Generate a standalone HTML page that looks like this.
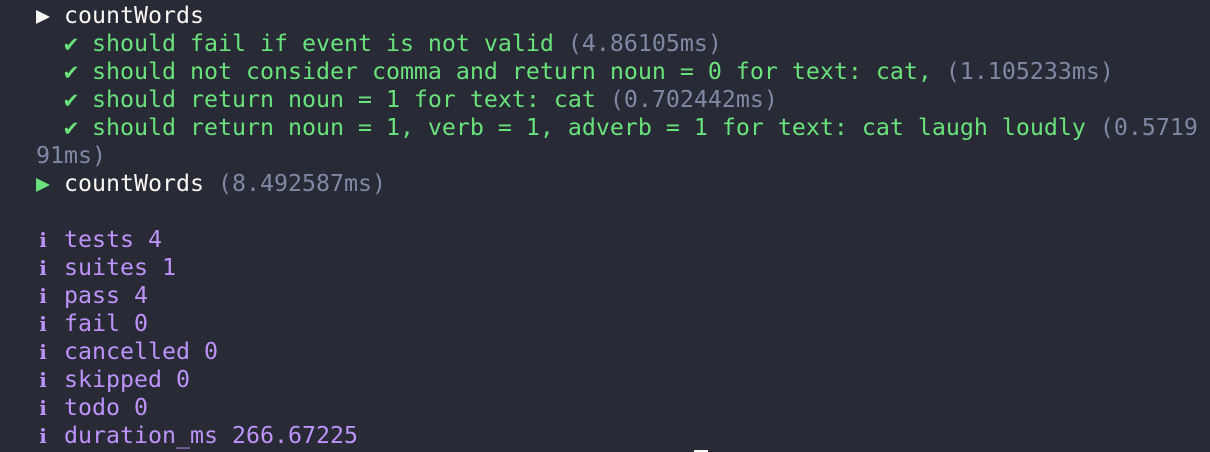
<!DOCTYPE html>
<html><head><meta charset="utf-8"><style>
html,body{margin:0;padding:0;background:#282a36;width:1210px;height:452px;overflow:hidden}
pre{margin:0;position:absolute;left:36px;top:2px;font-family:"DejaVu Sans Mono","Liberation Mono",monospace;font-size:23.25px;line-height:28px;color:#f8f8f2;white-space:pre}
.g{color:#6ae27c}.c{color:#7f88a4}.p{color:#bd93f9}.w{color:#f8f8f2}
.i{display:inline-block;width:14px;text-align:center;font-family:"DejaVu Serif",serif;font-size:20px;font-weight:bold}
#cur{position:absolute;left:694px;top:450px;width:14px;height:2px;background:#f8f8f2}
</style></head><body>
<pre><span class="w">▶ countWords</span>
<span class="g">  ✔ should fail if event is not valid </span><span class="c">(4.86105ms)</span>
<span class="g">  ✔ should not consider comma and return noun = 0 for text: cat, </span><span class="c">(1.105233ms)</span>
<span class="g">  ✔ should return noun = 1 for text: cat </span><span class="c">(0.702442ms)</span>
<span class="g">  ✔ should return noun = 1, verb = 1, adverb = 1 for text: cat laugh loudly </span><span class="c">(0.5719</span>
<span class="c">91ms)</span>
<span class="g">▶</span> <span class="w">countWords</span> <span class="c">(8.492587ms)</span>

<span class="p"><span class="i">i</span> tests 4</span>
<span class="p"><span class="i">i</span> suites 1</span>
<span class="p"><span class="i">i</span> pass 4</span>
<span class="p"><span class="i">i</span> fail 0</span>
<span class="p"><span class="i">i</span> cancelled 0</span>
<span class="p"><span class="i">i</span> skipped 0</span>
<span class="p"><span class="i">i</span> todo 0</span>
<span class="p"><span class="i">i</span> duration_ms 266.67225</span></pre>
<div id="cur"></div>
</body></html>
